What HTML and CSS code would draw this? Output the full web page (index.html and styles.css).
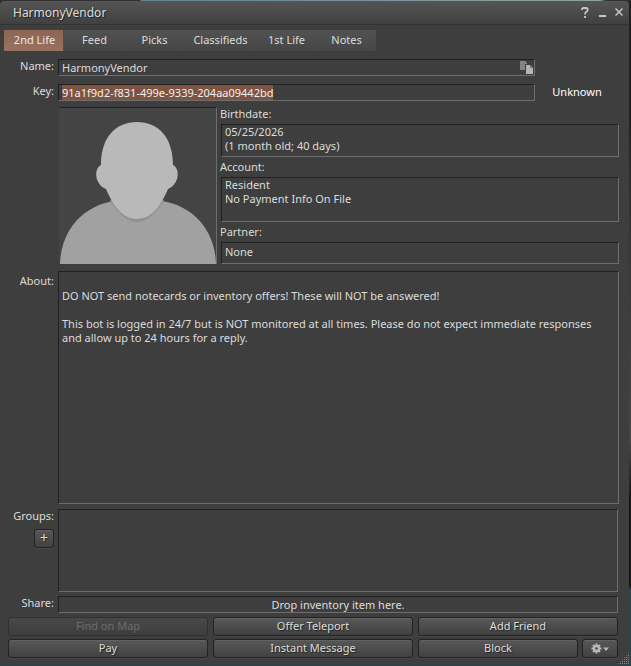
FILE: index.html
```html
<!DOCTYPE html>
<html lang="en">
<head>
  <meta charset="UTF-8">
  <meta name="viewport" content="width=device-width, initial-scale=1.0">
  <title>HarmonyVendor</title>
  <link rel="stylesheet" href="styles.css">
</head>
<body>
  <div class="floater">
    <header class="titlebar">
      <h1 class="title">HarmonyVendor</h1>
      <button class="title-button" aria-label="Help">
        <svg width="8" height="11" viewBox="0 0 8 11"><path d="M1 3V2.500Q1 1 2.500 1H5Q6.700 1 6.700 2.700Q6.700 4 5.400 4.700Q4 5.500 4 7.500M4 9V11" fill="none" stroke="#c8c8c8" stroke-width="1.8"/></svg>
      </button>
      <button class="title-button" aria-label="Minimize">
        <svg width="8" height="11" viewBox="0 0 8 11"><path d="M1 8h7v2H1z" fill="#c8c8c8"/></svg>
      </button>
      <button class="title-button" aria-label="Close">
        <svg width="8" height="11" viewBox="0 0 8 11"><path d="M0.500 1.500l7 7M7.500 1.500L0.500 8.500" stroke="#c8c8c8" stroke-width="1.5"/></svg>
      </button>
    </header>

    <nav class="tabs">
      <button class="tab active">2nd Life</button>
      <button class="tab">Feed</button>
      <button class="tab">Picks</button>
      <button class="tab wide">Classifieds</button>
      <button class="tab">1st Life</button>
      <button class="tab">Notes</button>
    </nav>

    <main class="profile">
      <div class="row name-row">
        <label class="label" for="name">Name:</label>
        <div class="name-field">
          <input class="field" id="name" type="text" value="HarmonyVendor" readonly>
          <button class="copy-button" aria-label="Copy">
            <svg width="13" height="13" viewBox="0 0 13 13">
              <path d="M0 0h5l2 2v7H0z" fill="#858585"/>
              <path d="M5 3h5l3 3v7H5z" fill="#3e3e3e"/>
              <path d="M6 4h4l3 3v6H6z" fill="#b4b4b4"/>
              <path d="M10 4v3h3z" fill="#777"/>
            </svg>
          </button>
        </div>
      </div>

      <div class="row key-row">
        <label class="label" for="key">Key:</label>
        <input class="field" id="key" type="text" value="91a1f9d2-f831-499e-9339-204aa09442bd" readonly>
        <span class="status">Unknown</span>
      </div>

      <div class="row summary">
        <div class="avatar">
          <svg viewBox="0 0 156 156" width="100%">
            <path d="M0 156C1 120 26 94 62 92H94C130 94 155 120 156 156z" fill="#a1a1a1"/>
            <path d="M50 93C59 106 67 114 77 114S95 106 104 93L96 85H58z" fill="#929292"/>
            <path d="M77 14C55 14 41 30 41 57C34 60 34 76 46 81C52 95 61 111 77 111S102 95 108 81C120 76 120 60 113 57C113 30 99 14 77 14z" fill="#b9b9b9"/>
          </svg>
        </div>
        <div class="details">
          <label for="birthdate">Birthdate:</label>
          <textarea class="field" id="birthdate" rows="2" readonly>05/25/2026
(1 month old; 40 days)</textarea>
          <label for="account">Account:</label>
          <textarea class="field" id="account" rows="3" readonly>Resident
No Payment Info On File</textarea>
          <label for="partner">Partner:</label>
          <input class="field" id="partner" type="text" value="None" readonly>
        </div>
      </div>

      <div class="row about-row">
        <label class="label" for="about">About:</label>
        <textarea class="field" id="about" rows="16" readonly>

DO NOT send notecards or inventory offers! These will NOT be answered!

This bot is logged in 24/7 but is NOT monitored at all times. Please do not expect immediate responses and allow up to 24 hours for a reply.</textarea>
      </div>

      <div class="row groups-row">
        <div class="label">
          <span id="groups-label">Groups:</span>
          <button class="button add-button" aria-label="Add group">+</button>
        </div>
        <div class="field groups" role="listbox" aria-labelledby="groups-label"></div>
      </div>

      <div class="row share-row">
        <span class="label">Share:</span>
        <div class="field drop-target">Drop inventory item here.</div>
      </div>
    </main>

    <footer class="actions">
      <button class="button" disabled>Find on Map</button>
      <button class="button">Offer Teleport</button>
      <button class="button">Add Friend</button>
      <button class="button">Pay</button>
      <button class="button">Instant Message</button>
      <div class="last-actions">
        <button class="button">Block</button>
        <button class="button" aria-label="More options">
          <svg width="18" height="11" viewBox="0 0 18 11">
            <g stroke="#b8b8b8" stroke-width="2">
              <path d="M5.500 0.500v10M0.500 5.500h10M2 2l7 7M9 2L2 9"/>
            </g>
            <circle cx="5.5" cy="5.5" r="3.7" fill="#b8b8b8"/>
            <circle cx="5.5" cy="5.5" r="1.3" fill="#484848"/>
            <path d="M12 4.500h6l-3 3.500z" fill="#b8b8b8"/>
          </svg>
        </button>
      </div>
    </footer>
    <div class="resize-grip"></div>
  </div>

  <script>
    const key = document.getElementById('key');
    key.focus();
    key.select();
  </script>
</body>
</html>
```
FILE: styles.css
```css
* {
  box-sizing: border-box;
}
body {
  margin: 0;
  padding: 1px 2px 1px 0;
  min-height: 100vh;
  background: linear-gradient(to right, #303030 140px, #638494 141px, #8ea3a0 600px, #303030 606px) top / 100% 1px no-repeat,
    linear-gradient(to bottom, #202020 120px, #303030 180px, #484848 440px, #151515 500px, #151515 585px, #234651 590px);
  color: #dcdcdc;
  font: 11px/14px "Noto Sans", sans-serif;
}
button, input, textarea {
  font: inherit;
  color: inherit;
  margin: 0;
}
button {
  padding: 0;
  border: none;
  background: none;
}
svg {
  display: block;
}
.floater {
  position: relative;
  min-height: calc(100vh - 2px);
  background: #3e3e3e;
  border-radius: 4px 4px 0 0;
}

/* title bar */
.titlebar {
  display: flex;
  align-items: center;
  gap: 9px;
  height: 24px;
  padding: 0 6px 0 13px;
  background: linear-gradient(to bottom, #555, #404040);
  border-bottom: 1px solid #343434;
  border-radius: 4px 4px 0 0;
}
.title {
  flex: 1;
  margin: 0;
  font-size: 12px;
  font-weight: normal;
  text-shadow: 1px 1px 1px #222;
}

/* tabs */
.tabs {
  display: flex;
  padding: 5px 4px 0;
}
.tab {
  width: 60px;
  height: 21px;
  padding: 0 0 1px 2px;
  background: linear-gradient(to bottom, #525252, #464646);
  border-right: 1px solid #4c4c4c;
}
.tab.wide {
  width: 72px;
}
.tab.active {
  background: linear-gradient(to bottom, #8c6553, #987260);
  color: #f0e8e4;
}

/* profile form */
.profile {
  padding: 8px 10px 0 0;
}
.row {
  display: grid;
  grid-template-columns: 54px 1fr;
  column-gap: 4px;
}
.label {
  text-align: right;
}
.field {
  display: block;
  width: 100%;
  padding: 0 0 1px 3px;
  background: #3e3e3e;
  border: 1px solid #6e6e6e;
  border-top-color: #202020;
  border-left-color: #202020;
  border-radius: 0;
  outline: none;
  resize: none;
  overflow: hidden;
}
input.field {
  height: 17px;
}
.name-row, .key-row {
  grid-template-columns: 54px 1fr 80px;
  margin-bottom: 8px;
}
.name-field {
  position: relative;
}
.copy-button {
  position: absolute;
  right: 2px;
  top: 2px;
}
#key::selection {
  background: rgba(126, 85, 66, 0.99);
  color: #f0f0f0;
}
.key-row {
  margin-bottom: 6px;
}
.status {
  padding: 1px 4px 0 0;
  text-align: center;
  color: #fff;
}
.summary {
  grid-template-columns: 158px 1fr;
  column-gap: 3px;
  margin-left: 59px;
  margin-bottom: 7px;
}
.avatar {
  align-self: start;
  background: #444;
  border: 1px solid #6e6e6e;
  border-top-color: #202020;
  border-left-color: #444;
  border-bottom: none;
}
.details {
  display: flex;
  flex-direction: column;
}
.details label {
  margin-bottom: 3px;
}
.details .field {
  margin: 0 0 3px 1px;
  width: calc(100% - 1px);
}
#birthdate {
  height: 33px;
}
#account {
  height: 45px;
}
#partner {
  height: 22px;
  padding-bottom: 3px;
  margin-bottom: 0;
}
#about {
  height: 233px;
  padding: 3px 10px 0 3px;
}
.about-row {
  margin-bottom: 5px;
}
.about-row .label {
  padding-top: 3px;
}
.groups-row, .share-row {
  margin-right: 1px;
}
.groups-row {
  margin-bottom: 4px;
}
.groups {
  height: 83px;
}
.add-button {
  width: 20px;
  margin-top: 6px;
  font-size: 14px;
}
.drop-target {
  padding: 1px 0 0;
  text-align: center;
}

/* buttons */
.button {
  height: 19px;
  padding-bottom: 1px;
  background: linear-gradient(to bottom, #585858, #414141);
  border: 1px solid #222;
  border-radius: 3px;
  box-shadow: inset 0 1px #626262, 0 1px #484848;
  text-shadow: 1px 1px 1px #222;
}
.button:disabled {
  background: linear-gradient(to bottom, #484848, #3e3e3e);
  border-color: #303030;
  box-shadow: none;
  color: #6c6c6c;
  text-shadow: none;
}
.actions {
  display: grid;
  grid-template-columns: repeat(3, 1fr);
  gap: 3px 5px;
  padding: 4px 11px 6px 8px;
}
.last-actions {
  display: grid;
  grid-template-columns: 1fr 36px;
  gap: 4px;
}
.last-actions svg {
  margin: 0 auto;
}
.resize-grip {
  position: absolute;
  right: 0;
  bottom: 0;
  width: 12px;
  height: 12px;
  background: conic-gradient(#8a8a8a 25%, transparent 0) 0 0 / 2px 2px;
  clip-path: polygon(100% 0, 100% 100%, 0 100%);
}
```
